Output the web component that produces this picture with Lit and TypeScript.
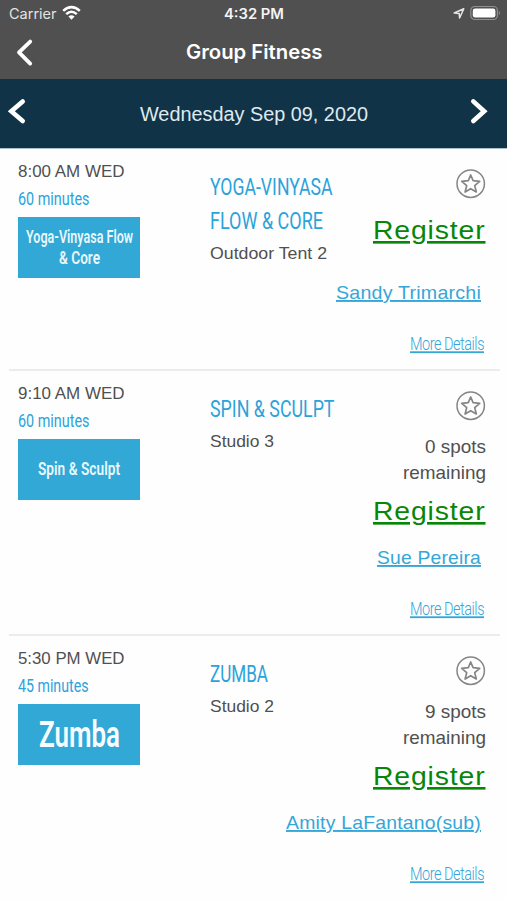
import { LitElement, html, svg, css, nothing } from "lit";
import { customElement, property } from "lit/decorators.js";

/** One line of text set to an exact measure. */
@customElement("fit-line")
class FitLine extends LitElement {
  @property() text = "";
  @property({ type: Number }) w = 100;
  @property({ type: Number }) h = 20;
  @property({ type: Number }) base = 15;

  static styles = css`
    :host { display: block; flex: none; }
    svg { display: block; overflow: visible; }
    text {
      fill: currentColor;
      text-decoration: var(--line, none);
      text-decoration-thickness: var(--thick, 1.5px);
      text-underline-offset: var(--drop, 2px);
    }
  `;

  render() {
    return html`<svg width=${this.w} height=${this.h}>
      ${svg`<text x="0" y=${this.base} textLength=${this.w} lengthAdjust="spacingAndGlyphs">${this.text}</text>`}
    </svg>`;
  }
}

interface Fit { text: string; w: number; }
interface Session {
  time: string;
  minutes: Fit;
  art: Fit[];
  big?: boolean;
  title: Fit[];
  room: Fit;
  spots?: Fit;
  coach: Fit;
}

const sessions: Session[] = [
  {
    time: "8:00 AM WED",
    minutes: { text: "60 minutes", w: 71.5 },
    art: [{ text: "Yoga-Vinyasa Flow", w: 107 }, { text: "& Core", w: 41 }],
    title: [{ text: "YOGA-VINYASA", w: 122.5 }, { text: "FLOW & CORE", w: 113 }],
    room: { text: "Outdoor Tent 2", w: 117 },
    coach: { text: "Sandy Trimarchi", w: 145 },
  },
  {
    time: "9:10 AM WED",
    minutes: { text: "60 minutes", w: 71.5 },
    art: [{ text: "Spin & Sculpt", w: 82 }],
    title: [{ text: "SPIN & SCULPT", w: 124.5 }],
    room: { text: "Studio 3", w: 64 },
    spots: { text: "0 spots", w: 61 },
    coach: { text: "Sue Pereira", w: 104 },
  },
  {
    time: "5:30 PM WED",
    minutes: { text: "45 minutes", w: 70.5 },
    art: [{ text: "Zumba", w: 81 }],
    big: true,
    title: [{ text: "ZUMBA", w: 58 }],
    room: { text: "Studio 2", w: 64 },
    spots: { text: "9 spots", w: 61 },
    coach: { text: "Amity LaFantano(sub)", w: 195 },
  },
];

@customElement("app-root")
class AppRoot extends LitElement {
  static styles = css`
    :host {
      display: block;
      height: 900px;
      overflow: hidden;
      background: #fefefe;
      font-family: "Liberation Sans", Arial, sans-serif;
      color: #505050;
    }
    svg { display: block; flex: none; }
    .status, .nav, .date {
      display: grid;
      grid-template-columns: 1fr auto 1fr;
      box-sizing: border-box;
      color: #fff;
    }
    .status, .nav { background: #505050; font-family: Inter, sans-serif; }
    .status { height: 28px; padding: 0 6px 0 9px; }
    .left { display: flex; gap: 5px; }
    .right { display: flex; gap: 5px; justify-content: flex-end; }
    .carrier { font-size: 14px; color: #e4e4e4; }
    .clock { font-size: 13.8px; font-weight: 600; color: #f4f4f4; margin-right: 2px; }
    .nav { height: 51px; padding-left: 14px; padding-right: 12px; }
    .heading { font-size: 20px; font-weight: 600; }
    .date {
      height: 70px;
      padding: 0 17px 0 6px;
      background: #113347;
      border-bottom: 1px solid #a9c0cc;
    }
    .day { font-size: 20px; color: #dfe9ef; margin-left: 11px; }
    .end { justify-self: end; }
    .row {
      display: flex;
      justify-content: space-between;
      box-sizing: border-box;
      height: 265px;
      margin: 0 7px 0 9px;
      border-bottom: 2px solid #ececec;
    }
    .row.first { height: 222px; }
    .row:last-child { border-color: transparent; }
    .when { width: 122px; padding: 13px 0 0 9px; }
    .time { font-size: 17.3px; }
    .minutes {
      font: 400 18.6px Roboto, sans-serif;
      color: #2ba3da;
    }
    .art {
      display: flex;
      flex-direction: column;
      align-items: center;
      justify-content: center;
      width: 122px;
      height: 61px;
      background: #31a8d5;
      color: #e9f7fc;
      font: 600 17.5px Roboto, sans-serif;
    }
    .art.big { font-size: 36px; color: #f6fcff; }
    .what { flex: 1; padding: 21px 0 0 70px; }
    .title { font: 400 24.8px Roboto, sans-serif; color: #2ba3da; }
    .room { font-size: 17.3px; }
    .act {
      display: flex;
      flex-direction: column;
      align-items: flex-end;
      padding: 20px 14px 0 0;
    }
    .star { margin-bottom: 12px; }
    .spots { font-size: 17.8px; }
    .register { font-size: 26.4px; letter-spacing: 0.8px; color: #078607; margin-right: 0.5px; --line: underline; --thick: 1.8px; --drop: 2px; }
    .grow { flex: 1; }
    .coach { font-size: 19px; letter-spacing: 0.2px; color: #36a6d8; margin-right: 5px; --line: underline; --thick: 1.4px; --drop: 1.5px; }
    .more { font: 300 18.2px Roboto, sans-serif; letter-spacing: -0.6px; color: #36a6d8; margin-right: 2px; --line: underline; --thick: 1.3px; --drop: 1.5px; }
  `;

  private star() {
    return html`<svg class="star" width="30" height="30" viewBox="0 0 30 30" fill="none" stroke="#858585">
      <circle cx="14.7" cy="14.7" r="13.7" stroke-width="1.5"></circle>
      <path d="M14.7 6 L17.1 11.7 L23.7 12.3 L18.7 16.6 L20.3 23 L14.7 19.7 L9.1 23 L10.7 16.6 L5.7 12.3 L12.3 11.7 Z" stroke-width="1.7" stroke-linejoin="round"></path>
    </svg>`;
  }

  private row(s: Session, i: number) {
    return html`<section class="row ${i === 0 ? "first" : ""}">
      <div class="when">
        <fit-line class="time" .text=${s.time} .w=${106.5} .h=${24} .base=${15.3}></fit-line>
        <fit-line class="minutes" .text=${s.minutes.text} .w=${s.minutes.w} .h=${31} .base=${19}></fit-line>
        <div class="art ${s.big ? "big" : ""}">
          ${s.art.map((a) => html`<fit-line .text=${a.text} .w=${a.w} .h=${s.big ? 42 : 21} .base=${s.big ? 33 : 15.8}></fit-line>`)}
        </div>
      </div>
      <div class="what">
        ${s.title.map((t) => html`<fit-line class="title" .text=${t.text} .w=${t.w} .h=${34} .base=${25.2}></fit-line>`)}
        <fit-line class="room" .text=${s.room.text} .w=${s.room.w} .h=${28} .base=${20.8}></fit-line>
      </div>
      <div class="act">
        ${this.star()}
        ${s.spots
          ? html`<fit-line class="spots" .text=${s.spots.text} .w=${s.spots.w} .h=${28} .base=${20}></fit-line>
              <fit-line class="spots" .text=${"remaining"} .w=${83} .h=${31} .base=${17.7}></fit-line>`
          : nothing}
        <fit-line class="register" .text=${"Register"} .w=${112.5} .h=${41} .base=${28}></fit-line>
        <div class="grow"></div>
        <fit-line class="coach" .text=${s.coach.text} .w=${s.coach.w} .h=${40} .base=${17}></fit-line>
        <fit-line class="more" .text=${"More Details"} .w=${74} .h=${47} .base=${28.3}></fit-line>
      </div>
    </section>`;
  }

  render() {
    return html`
      <header class="status">
        <div class="left">
          <fit-line class="carrier" .text=${"Carrier"} .w=${47.5} .h=${28} .base=${18.8}></fit-line>
          <svg width="20" height="28" viewBox="0 0 20 28" fill="none" stroke="#fff" stroke-width="2.5">
            <path d="M1.2 10.9 Q9.5 3.3 17.8 10.9"></path>
            <path d="M4.2 14.2 Q9.5 9.3 14.8 14.2"></path>
            <path d="M9.5 19.8 L6.4 16.6 Q9.5 14 12.6 16.6 Z" fill="#fff" stroke="none"></path>
          </svg>
        </div>
        <fit-line class="clock" .text=${"4:32 PM"} .w=${60} .h=${28} .base=${18.8}></fit-line>
        <div class="right">
          <svg width="12" height="28" viewBox="0 0 12 28" fill="none" stroke="#e6e6e6" stroke-width="1.5" stroke-linejoin="round">
            <path d="M1.2 13 L10.8 8.7 L6.6 18 L6.2 13.4 Z"></path>
          </svg>
          <svg width="31" height="28" viewBox="0 0 31 28">
            <rect x="0.8" y="6.5" width="26.6" height="13" rx="4" fill="none" stroke="#8f8f8f" stroke-width="1.2"></rect>
            <rect x="2.8" y="8.4" width="22.6" height="9.2" rx="2.3" fill="#fff"></rect>
            <path d="M28.9 11 Q30.8 13 28.9 15 Z" fill="#9a9a9a"></path>
          </svg>
        </div>
      </header>
      <nav class="nav">
        <svg width="24" height="51" viewBox="0 28 24 51" fill="none" stroke="#fff" stroke-width="3.8" stroke-linecap="round" stroke-linejoin="round">
          <path d="M16.2 41.6 L5 52.4 L16.2 63.6"></path>
        </svg>
        <fit-line class="heading" .text=${"Group Fitness"} .w=${136.5} .h=${51} .base=${31.4}></fit-line>
        <span></span>
      </nav>
      <div class="date">
        <svg width="24" height="69" viewBox="0 79 24 69" fill="none" stroke="#fff" stroke-width="4.6" stroke-linecap="round">
          <path d="M16.7 101.4 L5.3 111.2 L16.7 121"></path>
        </svg>
        <fit-line class="day" .text=${"Wednesday Sep 09, 2020"} .w=${228} .h=${69} .base=${42}></fit-line>
        <svg class="end" width="24" height="69" viewBox="0 79 24 69" fill="none" stroke="#fff" stroke-width="4.6" stroke-linecap="round">
          <path d="M7.3 101.4 L18.2 111.2 L7.3 121"></path>
        </svg>
      </div>
      <main>${sessions.map((s, i) => this.row(s, i))}</main>
    `;
  }
}
